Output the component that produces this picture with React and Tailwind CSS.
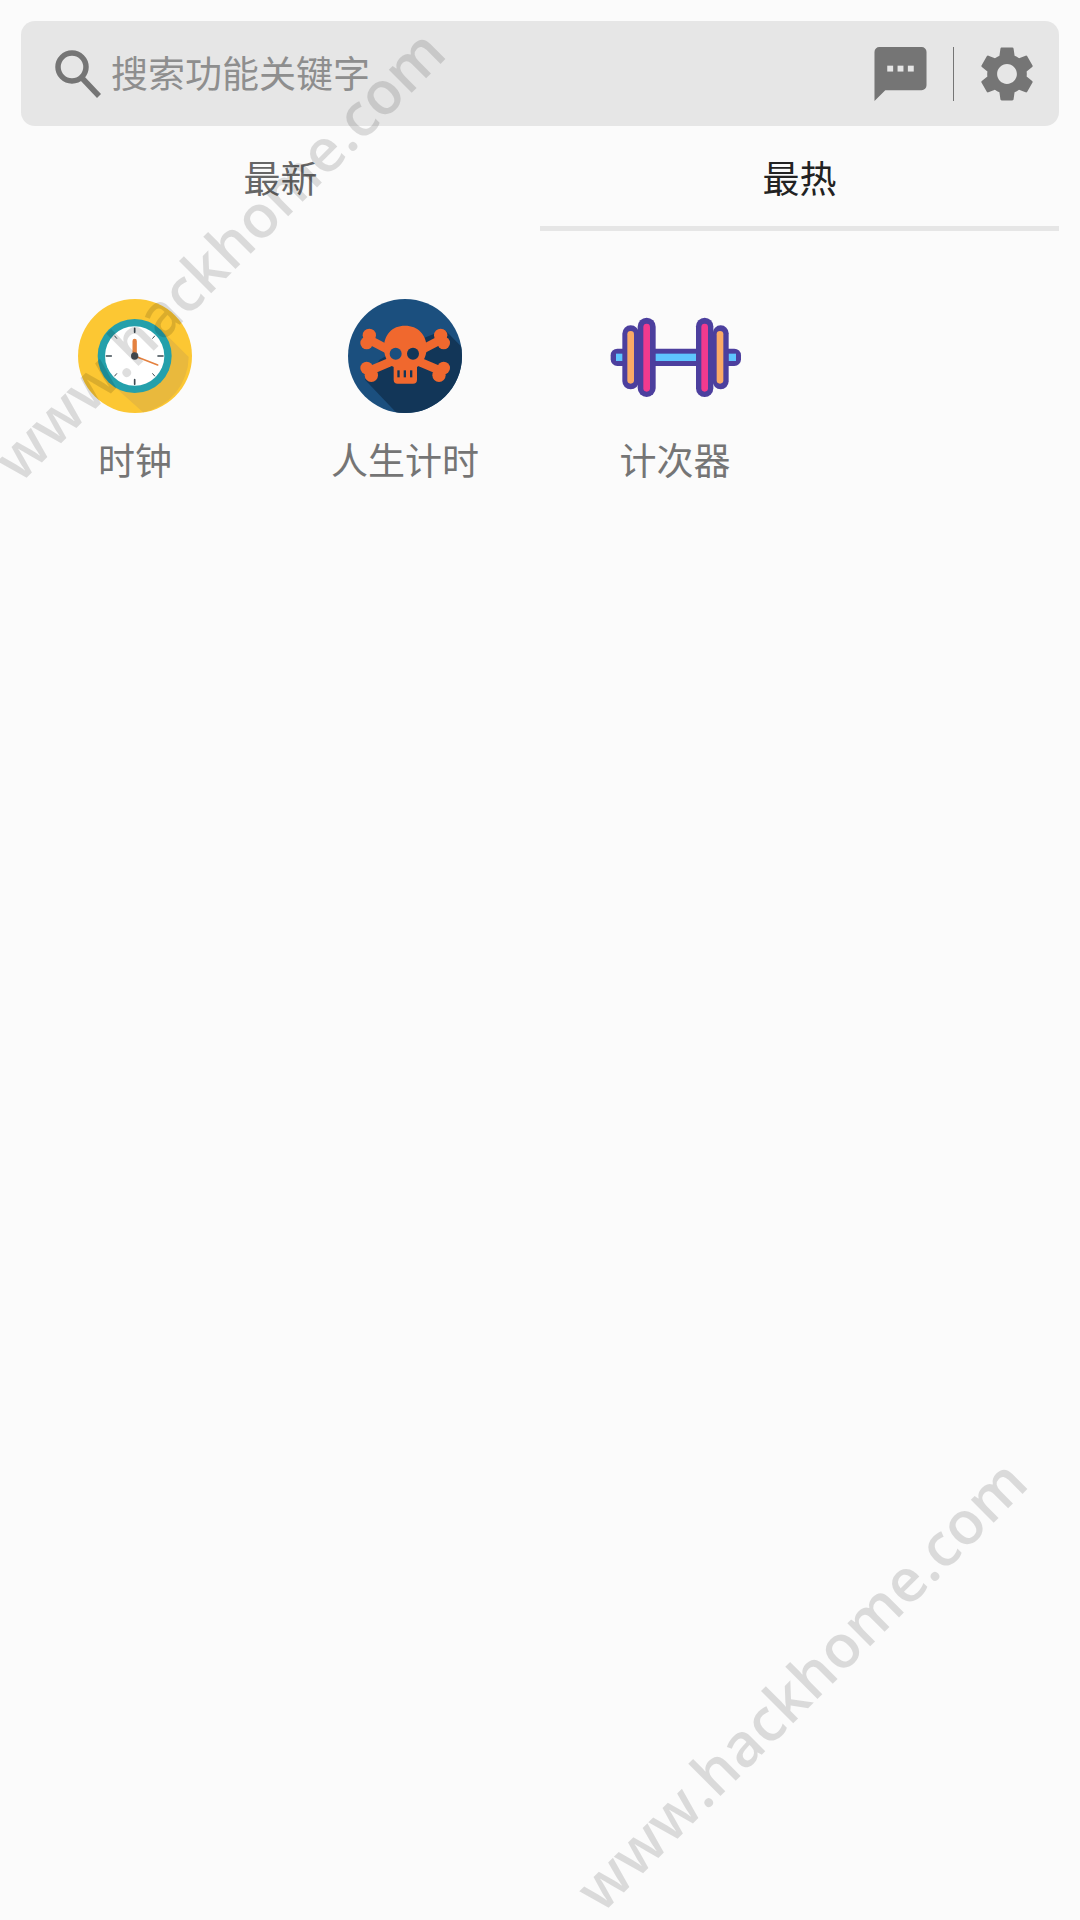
import React from "react";
import { MdSettings } from "react-icons/md";

const cjk = "font-['Noto_Sans_CJK_SC','Noto_Sans',sans-serif]";

function SearchIcon() {
  return (
    <svg width="46" height="48" viewBox="0 0 46 48" fill="none" stroke="#757575">
      <circle cx="17" cy="17" r="14" strokeWidth="5.5" />
      <path d="M27 28 L44 46" strokeWidth="5.5" />
    </svg>
  );
}

function ChatIcon() {
  return (
    <svg width="53" height="54" viewBox="0 0 53 55">
      <path d="M5 0 H48 a5 5 0 0 1 5 5 V39 a5 5 0 0 1 -5 5 H11 L0 55 V5 a5 5 0 0 1 5 -5 Z" fill="#757575" />
      <rect x="13" y="19" width="6" height="6" fill="#e6e6e6" />
      <rect x="23.5" y="19" width="6" height="6" fill="#e6e6e6" />
      <rect x="34" y="19" width="6" height="6" fill="#e6e6e6" />
    </svg>
  );
}

function ClockIcon() {
  return (
    <svg width="114" height="114" viewBox="55 58 342 342">
      <circle cx="226" cy="229" r="171" fill="#fcc733" />
      <path d="M305 150 L387 232 A171 171 0 0 1 250 398 L148 306 Z" fill="#e9b93d" />
      <circle cx="225" cy="229" r="111" fill="#24a0ab" />
      <circle cx="225" cy="229" r="89" fill="#ffffff" />
      <g stroke="#3d4a52" strokeLinecap="round">
        <path d="M225 146 V158 M225 300 V314 M140 229 H155 M295 229 H310" strokeWidth="5" />
        <path d="M165 169 L171 176 M285 169 L279 176 M165 289 L171 282 M285 289 L279 282" strokeWidth="3" />
      </g>
      <path d="M225 229 V184" stroke="#e4813f" strokeWidth="13" strokeLinecap="round" />
      <path d="M225 229 L294 256" stroke="#e4813f" strokeWidth="5" strokeLinecap="round" />
      <circle cx="225" cy="229" r="11" fill="#4a5157" />
    </svg>
  );
}

function SkullIcon() {
  return (
    <svg width="114" height="114" viewBox="55 58 342 342">
      <defs>
        <clipPath id="skull-clip">
          <circle cx="226" cy="229" r="171" />
        </clipPath>
      </defs>
      <circle cx="226" cy="229" r="171" fill="#1b4f7e" />
      <path d="M345 150 L420 226 V420 H220 L106 300 L150 240 L220 200 Z" fill="#123658" clipPath="url(#skull-clip)" />
      <g fill="#f0682e" stroke="#f0682e" strokeLinecap="round">
        <path d="M118 180 L180 212" strokeWidth="26" />
        <path d="M334 180 L272 212" strokeWidth="26" />
        <path d="M118 274 L180 248" strokeWidth="26" />
        <path d="M334 274 L272 248" strokeWidth="26" />
      </g>
      <g fill="#f0682e">
        <circle cx="119" cy="167" r="20" />
        <circle cx="111" cy="190" r="19" />
        <circle cx="333" cy="167" r="20" />
        <circle cx="342" cy="190" r="19" />
        <circle cx="111" cy="265" r="19" />
        <circle cx="125" cy="287" r="20" />
        <circle cx="342" cy="265" r="19" />
        <circle cx="328" cy="287" r="20" />
        <path d="M226 138 C265 138 291 165 291 205 C291 235 275 255 262 262 V300 Q262 312 250 312 H204 Q192 312 192 300 V262 C178 255 163 235 163 205 C163 165 187 138 226 138 Z" />
      </g>
      <circle cx="198" cy="222" r="18" fill="#1b4f7e" />
      <circle cx="250" cy="222" r="18" fill="#123658" />
      <g fill="#123658">
        <rect x="203" y="272" width="7" height="21" />
        <rect x="222" y="272" width="7" height="21" />
        <rect x="241" y="272" width="7" height="21" />
      </g>
    </svg>
  );
}

function DumbbellIcon() {
  return (
    <svg width="150" height="110" viewBox="0 0 450 330">
      <rect x="32" y="143" width="391" height="52" rx="20" fill="#4c3f9e" />
      <rect x="48" y="158" width="22" height="22" fill="#5ec5ff" />
      <rect x="160" y="158" width="135" height="22" fill="#5ec5ff" />
      <rect x="385" y="158" width="23" height="22" fill="#5ec5ff" />
      <rect x="67" y="73" width="50" height="192" rx="25" fill="#4c3f9e" />
      <rect x="82" y="90" width="20" height="158" rx="10" fill="#fbaa66" />
      <rect x="113" y="50" width="54" height="238" rx="27" fill="#4c3f9e" />
      <rect x="130" y="68" width="20" height="204" rx="10" fill="#f23a8e" />
      <rect x="338" y="73" width="48" height="192" rx="24" fill="#4c3f9e" />
      <rect x="350" y="90" width="20" height="158" rx="10" fill="#fbaa66" />
      <rect x="288" y="50" width="52" height="238" rx="26" fill="#4c3f9e" />
      <rect x="304" y="68" width="20" height="204" rx="10" fill="#f23a8e" />
    </svg>
  );
}

function Tool({ icon, label }) {
  return (
    <div className="flex flex-col items-center">
      <div className="flex h-[114px] items-center justify-center">{icon}</div>
      <div className="mt-[18px] text-[37px] leading-[56px] text-[#757575]">{label}</div>
    </div>
  );
}

function Watermark({ className }) {
  return (
    <div
      className={`absolute -translate-x-1/2 -translate-y-1/2 -rotate-45 whitespace-nowrap font-['Open_Sans',sans-serif] text-[60px] font-semibold leading-none text-black/[0.13] ${className}`}
    >
      www.hackhome.com
    </div>
  );
}

export default function App() {
  return (
    <div className={`relative h-[1920px] w-[1080px] overflow-hidden bg-[#fbfbfb] ${cjk}`}>
      {/* Search bar */}
      <div className="mx-[21px] mt-[21px] flex h-[105px] items-center rounded-[14px] bg-[#e6e6e6] pl-[34px] pr-[27px]">
        <SearchIcon />
        <span className="ml-[10px] flex-1 pb-[1px] text-[37px] text-[#8e8e8e]">搜索功能关键字</span>
        <ChatIcon />
        <div className="ml-[26px] mr-[28px] h-[54px] w-px bg-[#757575]" />
        <MdSettings size={66} color="#757575" className="-mx-[8px]" />
      </div>

      {/* Tabs */}
      <div className="mx-[21px] grid h-[105px] grid-cols-2 text-[37px]">
        <div className="flex items-center justify-center pb-[1px] text-[#666666]">最新</div>
        <div className="flex items-center justify-center border-b-[5px] border-[#e6e6e6] pt-[4px] text-[#222222]">最热</div>
      </div>

      {/* Tools */}
      <div className="mt-[68px] grid grid-cols-4">
        <Tool icon={<ClockIcon />} label="时钟" />
        <Tool icon={<SkullIcon />} label="人生计时" />
        <Tool icon={<DumbbellIcon />} label="计次器" />
      </div>

      <Watermark className="left-[218px] top-[254px]" />
      <Watermark className="left-[800px] top-[1684px]" />
    </div>
  );
}
